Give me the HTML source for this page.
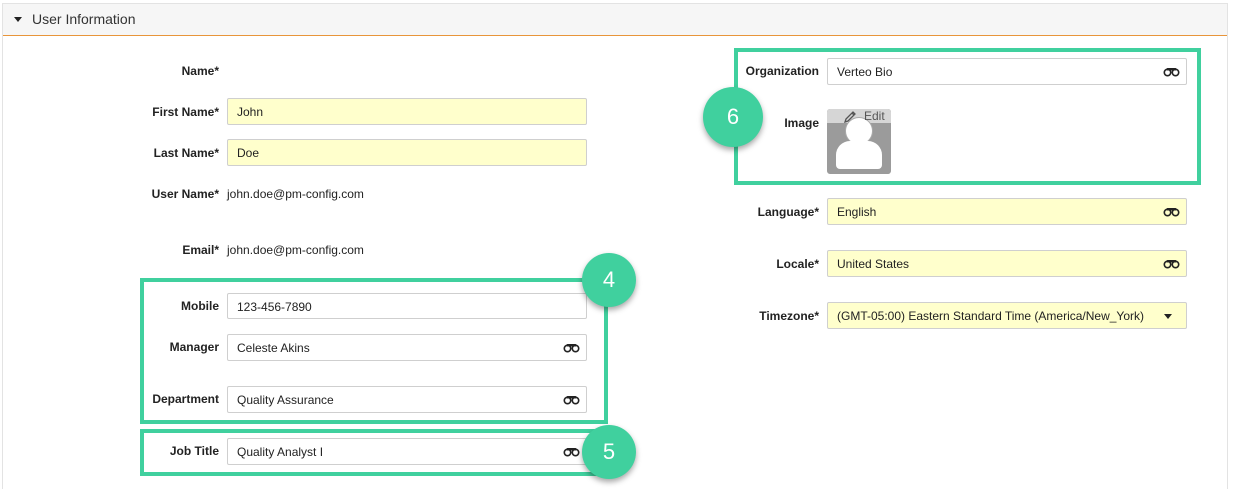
<!DOCTYPE html>
<html><head><meta charset="utf-8"><style>
*{box-sizing:border-box;margin:0;padding:0}
body{width:1233px;height:487px;background:#fff;position:relative;overflow:hidden;font-family:"Liberation Sans",Arial,sans-serif;font-size:12px;color:#222}
.abs{position:absolute}
.panel{left:2px;top:3px;width:1226px;height:486px;border:1px solid #e3e3e3;border-bottom:none}
.hdr{left:3px;top:4px;width:1224px;height:32px;background:#f6f6f6;border-bottom:1px solid #e8953a}
.hdr span{position:absolute;left:29px;top:7px;font-size:14px;color:#333}
.tri{position:absolute;left:11px;top:13px;width:0;height:0;border-left:4px solid transparent;border-right:4px solid transparent;border-top:5px solid #222}
.lbl{position:absolute;font-weight:bold;text-align:right;width:150px;color:#222}
.l{left:69px}.r{left:669px}
.inp{position:absolute;width:360px;height:27px;border:1px solid #cfcfcf;border-radius:2px;background:#fff;padding:6px 9px;color:#222}
.y{background:#ffffcc}
.val{position:absolute;left:227px}
.bino{position:absolute;right:6px;top:8px}
.box{position:absolute;border:4px solid #40d09e}
.circ{position:absolute;border-radius:50%;background:#40d09e;color:#fff;font-size:22px;text-align:center;box-shadow:0 3px 6px rgba(0,0,0,.35)}
</style></head><body>
<div class="abs panel"></div>
<div class="abs hdr"><div class="tri"></div><span>User Information</span></div>

<div class="lbl l" style="top:64px">Name*</div>
<div class="lbl l" style="top:105px">First Name*</div>
<div class="inp y" style="left:227px;top:98px">John</div>
<div class="lbl l" style="top:146px">Last Name*</div>
<div class="inp y" style="left:227px;top:139px">Doe</div>
<div class="lbl l" style="top:187px">User Name*</div>
<div class="val" style="top:187px">john.doe@pm-config.com</div>
<div class="lbl l" style="top:243px">Email*</div>
<div class="val" style="top:243px">john.doe@pm-config.com</div>

<div class="box" style="left:140px;top:278px;width:468px;height:146px"></div>
<div class="box" style="left:140px;top:429px;width:468px;height:47px"></div>

<div class="lbl l" style="top:299px">Mobile</div>
<div class="inp" style="left:227px;top:293px;height:26px">123-456-7890</div>
<div class="lbl l" style="top:340px">Manager</div>
<div class="inp" style="left:227px;top:334px">Celeste Akins<svg class="bino" width="17" height="10" viewBox="0 0 17 10"><circle cx="4.5" cy="5.5" r="3.2" fill="none" stroke="#222" stroke-width="1.6"/><circle cx="12.5" cy="5.5" r="3.2" fill="none" stroke="#222" stroke-width="1.6"/><rect x="3.5" y="1" width="10" height="2.5" rx="1" fill="#222"/></svg></div>
<div class="lbl l" style="top:392px">Department</div>
<div class="inp" style="left:227px;top:386px">Quality Assurance<svg class="bino" width="17" height="10" viewBox="0 0 17 10"><circle cx="4.5" cy="5.5" r="3.2" fill="none" stroke="#222" stroke-width="1.6"/><circle cx="12.5" cy="5.5" r="3.2" fill="none" stroke="#222" stroke-width="1.6"/><rect x="3.5" y="1" width="10" height="2.5" rx="1" fill="#222"/></svg></div>
<div class="lbl l" style="top:444px">Job Title</div>
<div class="inp" style="left:227px;top:438px">Quality Analyst I<svg class="bino" width="17" height="10" viewBox="0 0 17 10"><circle cx="4.5" cy="5.5" r="3.2" fill="none" stroke="#222" stroke-width="1.6"/><circle cx="12.5" cy="5.5" r="3.2" fill="none" stroke="#222" stroke-width="1.6"/><rect x="3.5" y="1" width="10" height="2.5" rx="1" fill="#222"/></svg></div>

<div class="circ" style="left:582px;top:253px;width:54px;height:54px;line-height:54px">4</div>
<div class="circ" style="left:582px;top:425px;width:54px;height:54px;line-height:54px">5</div>

<div class="box" style="left:734px;top:48px;width:467px;height:137px"></div>
<div class="lbl r" style="top:64px">Organization</div>
<div class="inp" style="left:827px;top:58px">Verteo Bio<svg class="bino" width="17" height="10" viewBox="0 0 17 10"><circle cx="4.5" cy="5.5" r="3.2" fill="none" stroke="#222" stroke-width="1.6"/><circle cx="12.5" cy="5.5" r="3.2" fill="none" stroke="#222" stroke-width="1.6"/><rect x="3.5" y="1" width="10" height="2.5" rx="1" fill="#222"/></svg></div>
<div class="lbl r" style="top:116px">Image</div>
<div class="abs" style="left:827px;top:109px;width:64px;height:65px;background:#9b9b9b;border-radius:3px;overflow:hidden">
  <div class="abs" style="left:0;top:0;width:64px;height:14px;background:#d6d6d6"></div>
  <div class="abs" style="left:18px;top:8px;width:28px;height:28px;border-radius:50%;background:#fff;border:1px solid #aaa"></div>
  <div class="abs" style="left:9px;top:32px;width:46px;height:28px;background:#fff;border-radius:14px 14px 4px 4px"></div>
  <svg class="abs" style="left:16px;top:1px" width="14" height="14" viewBox="0 0 14 14"><path d="M2 12 L3 9 L10 2 L12 4 L5 11 Z M9 3 L11 5" fill="none" stroke="#555" stroke-width="1.3"/></svg>
  <div class="abs" style="left:37px;top:0px;font-size:12px;color:#555">Edit</div>
</div>
<div class="circ" style="left:703px;top:87px;width:60px;height:60px;line-height:60px">6</div>

<div class="lbl r" style="top:205px">Language*</div>
<div class="inp y" style="left:827px;top:198px">English<svg class="bino" width="17" height="10" viewBox="0 0 17 10"><circle cx="4.5" cy="5.5" r="3.2" fill="none" stroke="#222" stroke-width="1.6"/><circle cx="12.5" cy="5.5" r="3.2" fill="none" stroke="#222" stroke-width="1.6"/><rect x="3.5" y="1" width="10" height="2.5" rx="1" fill="#222"/></svg></div>
<div class="lbl r" style="top:257px">Locale*</div>
<div class="inp y" style="left:827px;top:250px">United States<svg class="bino" width="17" height="10" viewBox="0 0 17 10"><circle cx="4.5" cy="5.5" r="3.2" fill="none" stroke="#222" stroke-width="1.6"/><circle cx="12.5" cy="5.5" r="3.2" fill="none" stroke="#222" stroke-width="1.6"/><rect x="3.5" y="1" width="10" height="2.5" rx="1" fill="#222"/></svg></div>
<div class="lbl r" style="top:309px">Timezone*</div>
<div class="inp y" style="left:827px;top:302px">(GMT-05:00) Eastern Standard Time (America/New_York)<div class="abs" style="right:14px;top:11px;width:0;height:0;border-left:4px solid transparent;border-right:4px solid transparent;border-top:5px solid #222"></div></div>
</body></html>
